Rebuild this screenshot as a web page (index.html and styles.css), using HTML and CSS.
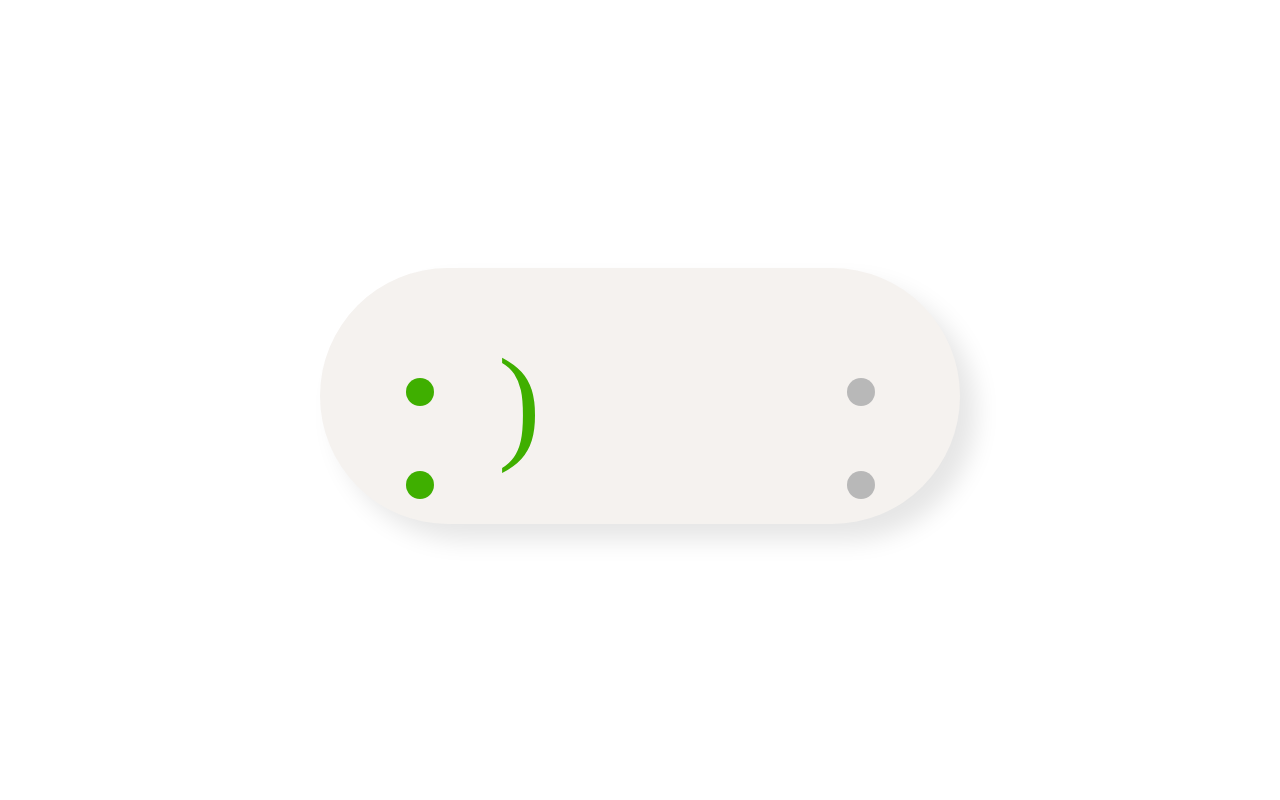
FILE: index.html
```html
<!DOCTYPE html>
<html>
<head>
<meta charset="utf-8">
<link rel="stylesheet" href="styles.css">
</head>
<body>
<div class="stage">
  <div class="pill">
    <div class="face">
      <div class="dots">
        <span class="dot on"></span>
        <span class="dot on"></span>
      </div>
      <span class="mouth">)</span>
    </div>
    <div class="dots">
      <span class="dot off"></span>
      <span class="dot off"></span>
    </div>
  </div>
</div>
</body>
</html>
```

FILE: styles.css
```css
html, body {
  margin: 0;
  padding: 0;
  background: #ffffff;
}
.stage {
  width: 1280px;
  height: 800px;
  display: flex;
  align-items: center;
  justify-content: center;
}
.pill {
  width: 640px;
  height: 256px;
  margin-top: -8px;
  border-radius: 128px;
  background: #f5f2ef;
  box-shadow: 16px 16px 24px rgba(0, 0, 0, 0.1);
  box-sizing: border-box;
  padding: 110px 85px 0 86px;
  display: flex;
  justify-content: space-between;
  align-items: flex-start;
}
.face {
  display: flex;
  align-items: flex-start;
}
.dots {
  display: flex;
  flex-direction: column;
  gap: 65px;
}
.dot {
  display: block;
  width: 28px;
  height: 28px;
  border-radius: 50%;
}
.dot.on { background: #3faf00; }
.dot.off { background: #b8b8b8; }
.mouth {
  font-family: "Liberation Serif", serif;
  font-size: 128px;
  line-height: 1;
  color: #3faf00;
  margin-left: 64px;
  margin-top: -39px;
}
```
